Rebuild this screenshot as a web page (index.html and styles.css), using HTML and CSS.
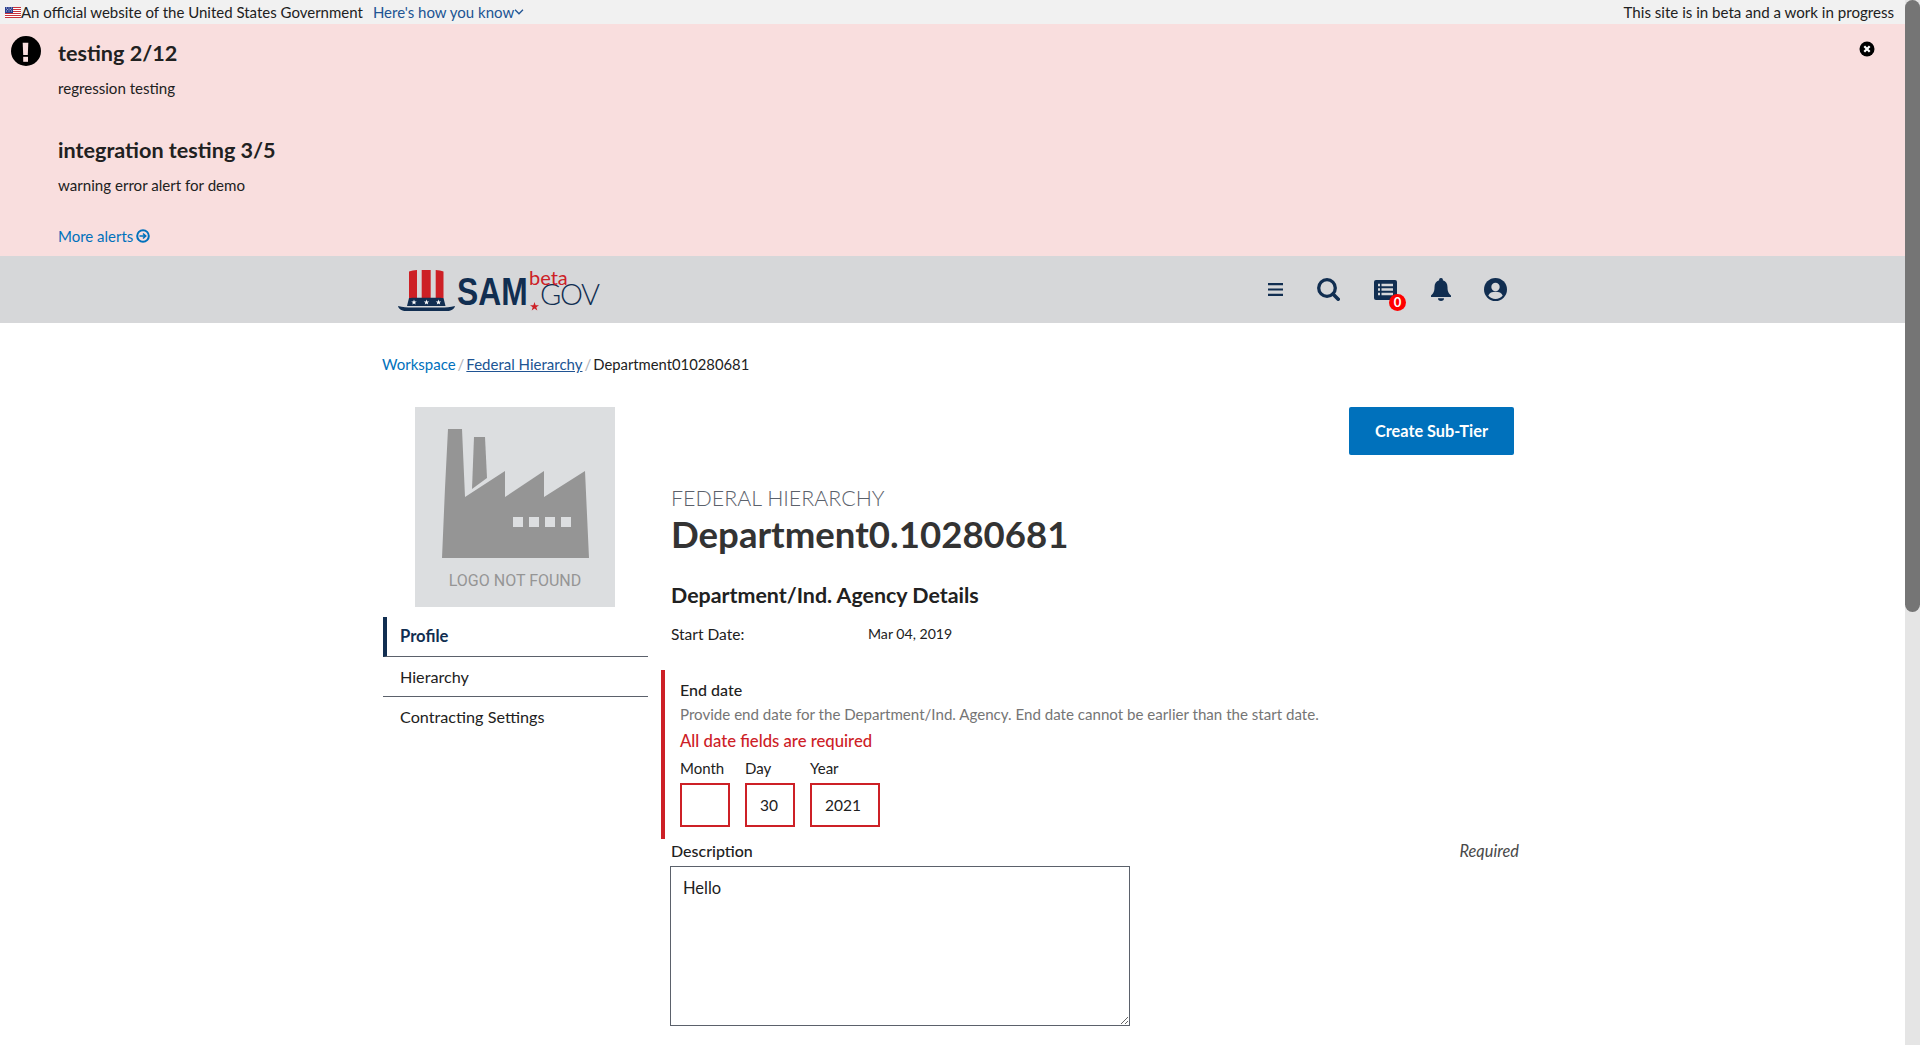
FILE: index.html
```html
<!DOCTYPE html>
<html lang="en">
<head>
<meta charset="utf-8">
<title>Department0.10280681 - SAM.gov</title>
<link rel="stylesheet" href="styles.css">
</head>
<body>
<div class="page">
  <div class="gov-banner">
    <div class="gov-left">
      <svg class="flag" viewBox="0 0 16 11" width="16" height="11"><rect width="16" height="11" fill="#fff"/><path d="M0 .5h16M0 2.500h16M0 4.500h16M0 6.500h16M0 8.500h16M0 10.500h16" stroke="#c8323c" stroke-width="1"/><rect width="8" height="6" fill="#2a3f8f"/><path d="M1 1h1M3.500 1h1M6 1h1M2.200 2.500h1M4.700 2.500h1M1 4h1M3.500 4h1M6 4h1" stroke="#fff" stroke-width=".7"/></svg>
      <span>An official website of the United States Government</span>
      <a class="how" href="#">Here's how you know<svg class="chev" viewBox="0 0 8 5" width="10" height="6"><path d="M.7.7 4 4 7.3.7" fill="none" stroke="#205493" stroke-width="1.1"/></svg></a>
    </div>
    <div class="gov-right">This site is in beta and a work in progress</div>
  </div>

  <section class="alerts">
    <svg class="alert-icon" viewBox="0 0 30 30" width="30" height="30"><circle cx="15" cy="15" r="15" fill="#000"/><path d="M11.700 6.700h5.600L16.800 19h-4.600z" fill="#f9dede"/><rect x="12.200" y="20.800" width="4.800" height="5" fill="#f9dede"/></svg>
    <div class="alert-body">
      <h3 class="alert-title">testing 2/12</h3>
      <p class="alert-text">regression testing</p>
      <h3 class="alert-title second">integration testing 3/5</h3>
      <p class="alert-text close-text">warning error alert for demo</p>
      <a class="more" href="#">More alerts <svg viewBox="0 0 14 14" width="14" height="14"><circle cx="7" cy="7" r="5.800" fill="none" stroke="#0071bc" stroke-width="2"/><path d="M3.500 7h6M7 4.500 9.700 7 7 9.500" fill="none" stroke="#0071bc" stroke-width="1.600"/></svg></a>
    </div>
    <svg class="alert-close" viewBox="0 0 16 16" width="16" height="16"><circle cx="8" cy="8" r="7.500" fill="#000"/><path d="M5.300 5.300l5.400 5.400M10.700 5.300l-5.400 5.400" stroke="#fff" stroke-width="2.200"/></svg>
  </section>

  <header class="site-header">
    <div class="logo">
      <svg class="logo-hat" viewBox="0 0 57 42" width="57" height="42">
        <path d="M11 2.500c2.500-.9 5-1.300 8-1.500v28h-8zM23.700 1h9v28h-9zM37.700 1c3 .2 5.600.6 7.800 1.500V29h-7.800z" fill="#cd2026"/>
        <path d="M11 29c.1-.3 34.400-.3 34.500 0l2 8H9z" fill="#112e51"/>
        <path d="M0 37c5 1.100 9 1.500 14 1.500h29c5 0 9-.4 14-1.500-.8 3.200-4 5-8 5H8c-4 0-7.200-1.800-8-5z" fill="#112e51"/>
        <path d="M16 30.500l.7 1.900 2 .1-1.600 1.200.6 1.900-1.700-1.100-1.700 1.100.6-1.900-1.600-1.200 2-.1zM28.500 30.500l.7 1.900 2 .1-1.600 1.200.6 1.900-1.700-1.100-1.700 1.100.6-1.900-1.600-1.200 2-.1zM40.500 30.500l.7 1.900 2 .1-1.600 1.200.6 1.900-1.700-1.100-1.700 1.100.6-1.900-1.600-1.200 2-.1z" fill="#fff"/>
      </svg>
      <span class="logo-sam">SAM</span>
      <svg class="logo-star" viewBox="0 0 10 10" width="9" height="9"><path d="M5 0l1.200 3.500H10L7 5.700 8.100 9.500 5 7.200 1.900 9.500 3 5.700 0 3.500h3.800z" fill="#cd2026"/></svg>
      <span class="logo-gov">GOV</span>
      <span class="logo-beta">beta</span>
    </div>
    <nav class="header-icons">
      <svg class="ic-menu" viewBox="0 0 15 13" width="15" height="13"><path d="M0 1.200h15M0 6.500h15M0 11.800h15" stroke="#112e51" stroke-width="2.200"/></svg>
      <svg class="ic-search" viewBox="0 0 23 23" width="23" height="23"><circle cx="10" cy="10" r="8.300" fill="none" stroke="#112e51" stroke-width="3.300"/><path d="M16 16l5.200 5.200" stroke="#112e51" stroke-width="3.600" stroke-linecap="round"/></svg>
      <span class="ic-list">
        <svg viewBox="0 0 23 20" width="23" height="20"><rect width="23" height="20" rx="2" fill="#112e51"/><path d="M4 5h2M4 9.500h2M4 14h2M7.500 5h11.500M7.500 9.500h11.500M7.500 14h11.500" stroke="#d6d7d9" stroke-width="2.400"/></svg>
        <span class="badge">0</span>
      </span>
      <svg class="ic-bell" viewBox="0 0 20 23" width="20" height="23"><path d="M10 0a1.800 1.800 0 0 1 1.800 2.200c3.200.8 4.700 3.400 4.700 7 0 4.600 1.300 6 3.500 8.300v1.500H0v-1.500c2.200-2.300 3.500-3.700 3.500-8.300 0-3.600 1.500-6.200 4.700-7A1.800 1.800 0 0 1 10 0z" fill="#112e51"/><path d="M7 20.300h6a3 2.700 0 0 1-6 0z" fill="#112e51"/></svg>
      <svg class="ic-user" viewBox="0 0 23 23" width="23" height="23"><circle cx="11.500" cy="11.500" r="11.500" fill="#112e51"/><circle cx="11.500" cy="9" r="4.200" fill="#d6d7d9"/><path d="M4.300 17.500c1.300-2.800 3.500-3.700 7.200-3.700s5.900.9 7.200 3.700c-1.700 2.100-4.300 3.400-7.200 3.400s-5.500-1.300-7.200-3.400z" fill="#d6d7d9"/></svg>
    </nav>
  </header>

  <main class="content">
    <nav class="breadcrumb">
      <a class="crumb" href="#">Workspace</a><span class="sep">/</span><a class="crumb under" href="#">Federal Hierarchy</a><span class="sep">/</span><span class="crumb-current">Department010280681</span>
    </nav>
    <div class="columns">
      <aside class="side">
        <div class="logo-box">
          <svg viewBox="0 0 200 200" width="200" height="200">
            <path d="M33 22h14l3 68 40-26v26l39-26v26l41-26 4 87H27l3-70z" fill="#959595"/>
            <path d="M59 30h11l2 41-15 11z" fill="#959595"/>
            <path d="M98 110h10v10H98zM114 110h10v10h-10zM130 110h10v10h-10zM146 110h10v10h-10z" fill="#dcdee0"/>
          </svg>
          <span class="logo-missing">LOGO NOT FOUND</span>
        </div>
        <ul class="side-nav">
          <li class="side-item active">Profile</li>
          <li class="side-item">Hierarchy</li>
          <li class="side-item last">Contracting Settings</li>
        </ul>
      </aside>
      <div class="main-col">
        <div class="action-row"><a class="btn" href="#">Create Sub-Tier</a></div>
        <div class="eyebrow">FEDERAL HIERARCHY</div>
        <h1 class="title">Department0.10280681</h1>
        <h2 class="subtitle">Department/Ind. Agency Details</h2>
        <dl class="start"><dt>Start Date:</dt><dd>Mar 04, 2019</dd></dl>
        <div class="error-group">
          <div class="field-label">End date</div>
          <div class="hint">Provide end date for the Department/Ind. Agency. End date cannot be earlier than the start date.</div>
          <div class="error-msg">All date fields are required</div>
          <div class="date-row">
            <label class="date-field"><span>Month</span><input class="date-input w-month" type="text" value=""></label>
            <label class="date-field"><span>Day</span><input class="date-input w-day" type="text" value="30"></label>
            <label class="date-field"><span>Year</span><input class="date-input w-year" type="text" value="2021"></label>
          </div>
        </div>
        <div class="desc-head"><span class="field-label">Description</span><em class="req">Required</em></div>
        <textarea class="desc">Hello</textarea>
      </div>
    </div>
  </main>
</div>
<div class="scrollbar"><div class="thumb"></div></div>
</body>
</html>
```
FILE: styles.css
```css
* { box-sizing: border-box; }
html, body { margin: 0; padding: 0; height: 1045px; overflow: hidden; background: #fff; }
body { font-family: "Lato", "Noto Sans", sans-serif; font-size: 15px; color: #212121; }
a { color: #0071bc; text-decoration: none; }
.page { width: 1905px; }

.gov-banner { height: 24px; background: #f1f1f1; display: flex; justify-content: space-between; align-items: center; font-size: 15px; padding-right: 11px; }
.gov-left { display: flex; align-items: center; padding-left: 5px; }
.flag { flex: none; }
.how { margin-left: 10px; color: #205493; display: inline-flex; align-items: center; gap: 0; }
.gov-right { color: #212121; font-size: 15.1px; }

.alerts { height: 232px; background: #f9dede; display: flex; padding: 12px 30px 0 11px; }
.alert-icon { flex: none; margin-right: 17px; }
.alert-body { flex: 1; padding-top: 3px; }
.alert-title { margin: 0; font-size: 21.6px; line-height: 28px; font-weight: 700; color: #212121; }
.alert-text { margin: 11px 0 0; font-size: 15.1px; line-height: 20px; }
.second { margin-top: 38px; }
.close-text { margin-top: 11px; }
.more { display: inline-flex; align-items: center; gap: 3px; margin-top: 31px; font-size: 15px; line-height: 20px; }
.alert-close { flex: none; margin-top: 5px; }

.site-header { height: 67px; background: #d6d7d9; display: flex; align-items: center; padding-left: 398px; }
.logo { position: relative; display: flex; align-items: flex-end; width: 350px; height: 42px; color: #112e51; }
.logo-hat { flex: none; margin-right: 2px; }
.logo-sam { display: block; width: 86px; margin-right: -16px; font-family: "Liberation Sans", sans-serif; font-size: 39px; line-height: 40px; font-weight: 700; transform: scaleX(.815); transform-origin: left center; margin-bottom: -1px; }
.logo-star { flex: none; margin: 0 1px 0 3px; }
.logo-gov { font-size: 29px; line-height: 24px; margin-bottom: 5px; font-weight: 300; letter-spacing: -1.4px; }
.logo-beta { position: absolute; left: 131px; top: -1px; font-size: 20px; line-height: 18px; color: #cd2026; }

.header-icons { display: flex; align-items: center; margin-left: 520px; }
.ic-menu { margin-right: 34px; }
.ic-search { margin-right: 34px; }
.ic-list { position: relative; display: block; width: 23px; height: 20px; margin-right: 34px; }
.ic-list svg { display: block; }
.badge { position: absolute; left: 15px; top: 14px; width: 17px; height: 17px; border-radius: 50%; background: #f00; color: #fff; font-size: 13px; font-weight: 700; line-height: 17px; text-align: center; }
.ic-bell { margin-right: 33px; }

.content { padding: 31px 0 0 382px; }
.breadcrumb { font-size: 15px; line-height: 20px; height: 20px; }
.sep { color: #aeb0b5; margin: 0 2px; }
.crumb.under { color: #205493; text-decoration: underline; }
.crumb-current { color: #212121; font-size: 14.8px; }

.columns { display: flex; margin-top: 33px; }
.side { width: 288px; flex: none; padding-left: 1px; }
.logo-box { position: relative; width: 200px; height: 200px; margin-left: 32px; background: #dcdee0; }
.logo-box svg { display: block; }
.logo-missing { position: absolute; left: 0; right: 0; top: 164px; text-align: center; font-family: "Roboto", sans-serif; font-size: 16px; line-height: 20px; color: #959595; }
.side-nav { list-style: none; margin: 10px 0 0; padding: 0; width: 265px; }
.side-item { height: 40px; padding-left: 17px; font-size: 16.2px; line-height: 39px; border-bottom: 1px solid #5b616b; border-left: 0 solid transparent; }
.side-item.active { border-left: 4px solid #112e51; padding-left: 13px; font-weight: 700; font-size: 16.6px; color: #112e51; }
.side-item.last { border-bottom: 0; }

.main-col { width: 850px; flex: none; }
.action-row { display: flex; justify-content: flex-end; padding-right: 6px; }
.btn { display: block; width: 165px; height: 48px; background: #0071bc; color: #fff; border-radius: 2px; font-size: 16.3px; font-weight: 700; line-height: 48px; text-align: center; }
.eyebrow { margin-top: 30px; padding-left: 1px; font-size: 21.4px; line-height: 26px; font-weight: 300; color: #5b616b; }
.title { margin: 0; padding-left: 1px; font-size: 36.6px; line-height: 46px; font-weight: 700; color: #333; }
.subtitle { margin: 24px 0 0; padding-left: 1px; font-size: 21.4px; line-height: 28px; font-weight: 700; color: #212121; }
.start { display: flex; margin: 15px 0 0; padding-left: 1px; line-height: 20px; }
.start dt { width: 197px; font-size: 15.5px; }
.start dd { margin: 0; font-size: 14.1px; }

.error-group { margin: 26px 0 0 -9px; width: 850px; height: 169px; border-left: 4px solid #cd2026; padding: 10px 0 0 15px; }
.field-label { font-size: 16px; line-height: 20px; font-weight: 500; }
.hint { font-size: 15.1px; line-height: 20px; margin-top: 4px; color: #757575; }
.error-msg { margin-top: 7px; font-size: 16.7px; line-height: 20px; font-weight: 500; color: #cd2026; }
.date-row { display: flex; gap: 15px; margin-top: 7px; }
.date-field { display: flex; flex-direction: column; font-size: 15px; line-height: 20px; }
.date-field span { height: 25px; }
.date-input { height: 44px; border: 2px solid #cd2026; padding: 0 13px; font: inherit; font-size: 15.500px; color: #212121; background: #fff; border-radius: 0; outline: 0; }
.w-month, .w-day { width: 50px; }
.w-year { width: 70px; }

.desc-head { display: flex; justify-content: space-between; width: 849px; height: 27px; padding: 2px 0 0 1px; }
.req { font-size: 16.4px; line-height: 20px; color: #494949; }
.desc { display: block; width: 460px; height: 160px; border: 1px solid #5b616b; border-radius: 0; padding: 10px 12px; font: inherit; font-size: 16.5px; line-height: 22px; color: #212121; outline: 0; }

.scrollbar { position: fixed; top: 0; right: 0; width: 15px; height: 1045px; background: #e5e5e5; }
.thumb { width: 15px; height: 612px; background: #757575; border-radius: 8px; }
```
